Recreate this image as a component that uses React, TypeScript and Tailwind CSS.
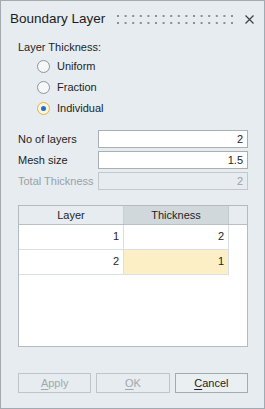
import React from 'react';

const font = { fontFamily: '"Liberation Sans", Arial, sans-serif' };

const Radio: React.FC<{ label: string; checked?: boolean }> = ({ label, checked }) => (
  <div className="flex h-[21px] items-center pl-[19px]">
    <span
      className={`flex h-[13px] w-[13px] items-center justify-center rounded-full border ${
        checked ? 'border-[#e6b443] bg-[#fbf4de]' : 'border-[#8e9498] bg-[#f5f7f8]'
      }`}
    >
      {checked && <span className="h-[5px] w-[5px] rounded-full bg-[#1f6fd2]" />}
    </span>
    <span className="ml-[7px] text-[11px] text-[#1e1e24]">{label}</span>
  </div>
);

const Field: React.FC<{ label: string; value: string; disabled?: boolean }> = ({ label, value, disabled }) => (
  <div className="flex h-[18px] items-center">
    <span className={`w-[80px] text-[11px] ${disabled ? 'text-[#9aa1a6]' : 'text-[#1e1e24]'}`}>{label}</span>
    <div
      className={`flex h-[18px] flex-1 items-center justify-end border pr-[4px] text-[11px] ${
        disabled ? 'border-[#c2c8cc] bg-[#e6ecef] text-[#9aa1a6]' : 'border-[#a9b0b5] bg-white text-[#1e1e24]'
      }`}
    >
      {value}
    </div>
  </div>
);

const Button: React.FC<{ u: string; rest: string; disabled?: boolean }> = ({ u, rest, disabled }) => (
  <div
    className={`flex h-[20px] items-center justify-center border text-[11px] ${
      disabled ? 'border-[#bfc5c9] bg-[#e6ecef] text-[#a1a8ac]' : 'border-[#a4abb0] bg-[#eaeff1] text-[#1e1e24]'
    }`}
  >
    <span className="underline underline-offset-2">{u}</span>
    {rest}
  </div>
);

const rows = [
  { layer: '1', thickness: '2' },
  { layer: '2', thickness: '1', active: true },
];

export default function App() {
  const dots = Array.from({ length: 16 }, (_, i) => 1 + i * 7.6);
  return (
    <div
      className="flex h-[409px] w-[265px] flex-col border border-[#a3abb0] bg-[#e6ecef] text-[#1e1e24]"
      style={font}
    >
      {/* Title bar */}
      <div className="flex h-[36px] items-center pl-[9px] pr-[10px]">
        <span className="text-[13.5px] text-[#1c1c22]">Boundary Layer</span>
        <div className="flex-1" />
        <svg width="118" height="10" viewBox="0 0 118 10" className="mt-[1px]">
          {dots.map((x) => (
            <g key={x} fill="#8a9095">
              <rect x={x} y="0" width="2" height="2" />
              <rect x={x} y="7" width="2" height="2" />
            </g>
          ))}
        </svg>
        <svg width="9" height="9" viewBox="0 0 9 9" className="ml-[11px]">
          <path d="M0.5 0.5 L8.5 8.5 M8.5 0.5 L0.5 8.5" stroke="#3c4146" strokeWidth="1.2" />
        </svg>
      </div>

      <div className="flex flex-1 flex-col pl-[17px] pr-[16px]">
        <div className="mt-[3px] h-[14px] text-[11px] leading-[14px]">Layer Thickness:</div>
        <div className="mt-[2px] flex flex-col">
          <Radio label="Uniform" />
          <Radio label="Fraction" />
          <Radio label="Individual" checked />
        </div>

        <div className="mt-[11px] flex flex-col gap-[3px]">
          <Field label="No of layers" value="2" />
          <Field label="Mesh size" value="1.5" />
          <Field label="Total Thickness" value="2" disabled />
        </div>

        {/* Table */}
        <div className="mt-[15px] h-[142px] border border-[#b4bbbf] bg-white">
          <div className="grid h-[19px] grid-cols-[105px_105px_1fr] border-b border-[#b8bec2] text-[11px]">
            <div className="flex items-center justify-center border-r border-[#c9cfd2] bg-[#e6ecef]">Layer</div>
            <div className="flex items-center justify-center border-r border-[#c3c9cc] bg-[#d1d8db]">Thickness</div>
            <div className="bg-[#e6ecef]" />
          </div>
          {rows.map((r) => (
            <div key={r.layer} className="grid h-[25px] grid-cols-[105px_105px_1fr] text-[11px]">
              <div className="flex justify-end border-b border-r border-[#dadfe1] pr-[4px] pt-[3px]">{r.layer}</div>
              <div
                className={`flex justify-end border-b border-r border-[#dadfe1] pr-[4px] pt-[3px] ${
                  r.active ? 'bg-[#fdefc5]' : 'bg-white'
                }`}
              >
                {r.thickness}
              </div>
              <div />
            </div>
          ))}
        </div>

        <div className="mt-[26px] grid grid-cols-3 gap-[5px]">
          <Button u="A" rest="pply" disabled />
          <Button u="O" rest="K" disabled />
          <Button u="C" rest="ancel" />
        </div>
      </div>
    </div>
  );
}
